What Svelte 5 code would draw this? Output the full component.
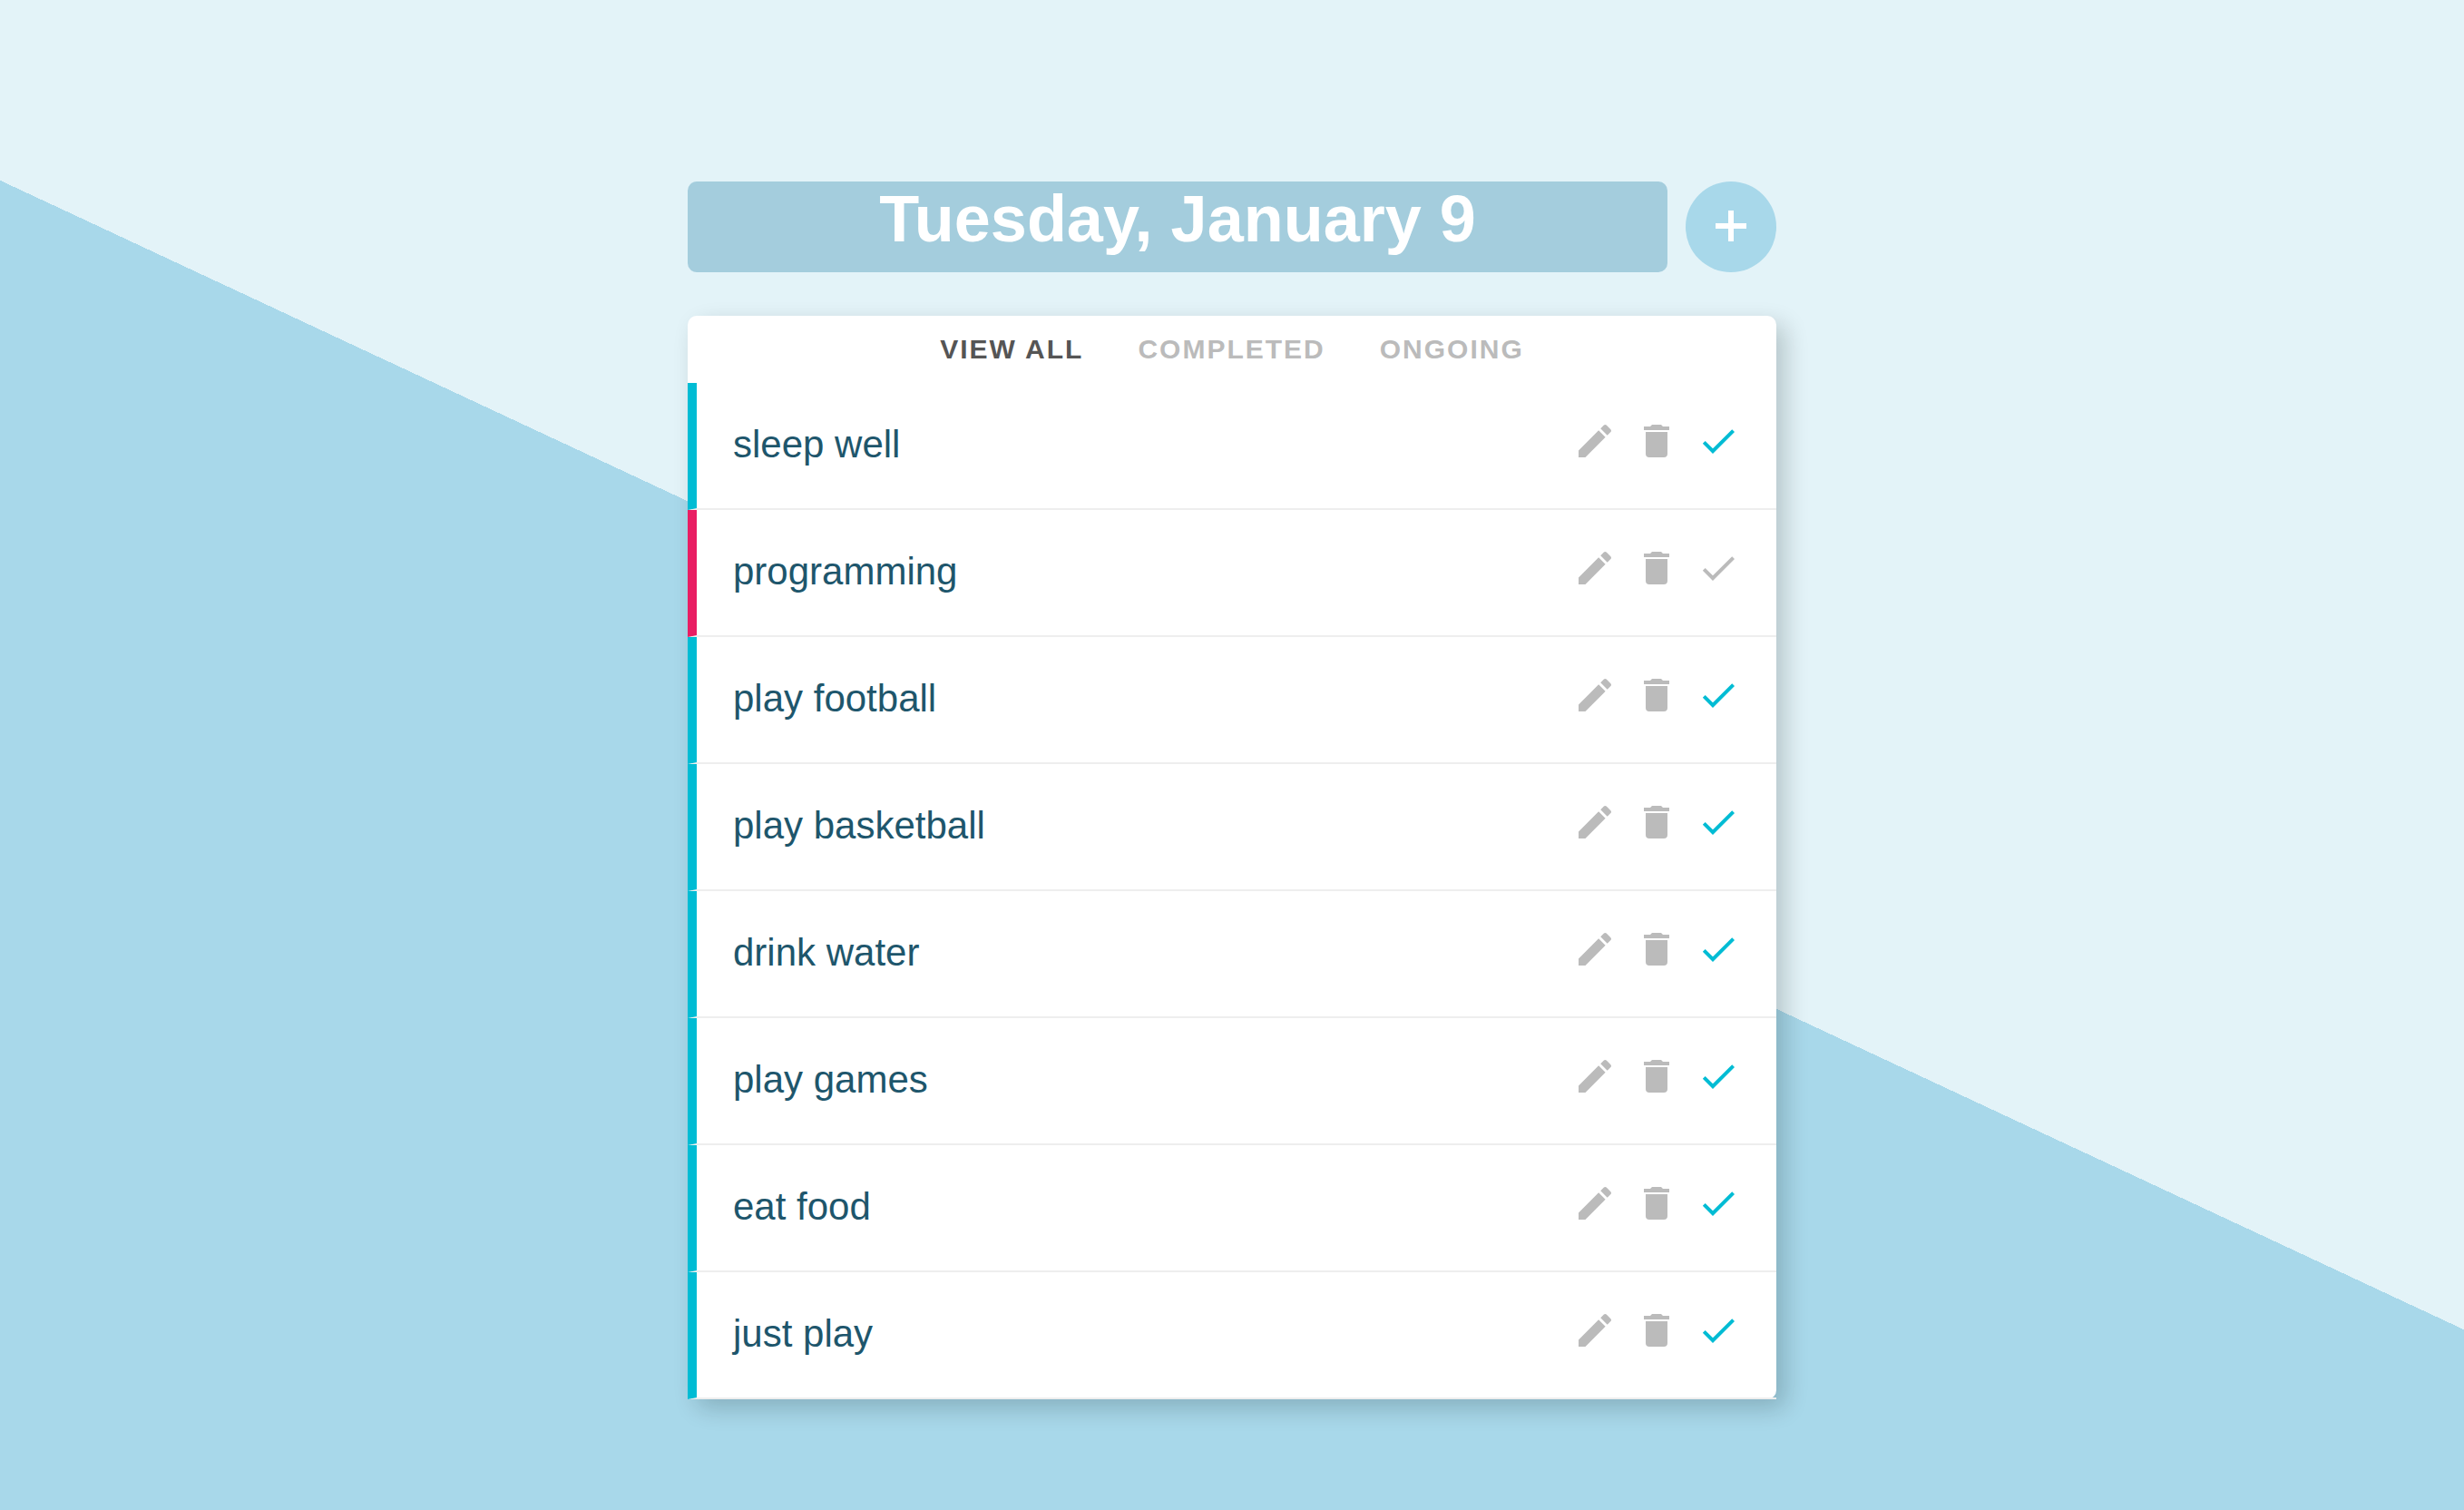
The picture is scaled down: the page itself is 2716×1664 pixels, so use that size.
<script>
  const filters = ['View all', 'Completed', 'Ongoing'];
  let active = $state('View all');
  let tasks = $state([
    { name: 'sleep well', done: true },
    { name: 'programming', done: false },
    { name: 'play football', done: true },
    { name: 'play basketball', done: true },
    { name: 'drink water', done: true },
    { name: 'play games', done: true },
    { name: 'eat food', done: true },
    { name: 'just play', done: true }
  ]);

  const visible = $derived(
    tasks.filter((t) => active === 'View all' || t.done === (active === 'Completed'))
  );

  function remove(task) {
    tasks = tasks.filter((t) => t !== task);
  }
</script>

<main>
  <header>
    <h1>Tuesday, January 9</h1>
    <button class="add" aria-label="Add task">
      <svg viewBox="0 0 34 34" aria-hidden="true"><path d="M14 0h6v14h14v6H20v14h-6V20H0v-6h14z" /></svg>
    </button>
  </header>

  <section class="card">
    <nav>
      {#each filters as f}
        <button class="filter" class:active={active === f} onclick={() => (active = f)}>{f}</button>
      {/each}
    </nav>
    <ul>
      {#each visible as task}
        <li class:done={task.done}>
          <span class="name">{task.name}</span>
          <div class="actions">
            <button class="icon" aria-label="Edit {task.name}">
              <svg viewBox="0 0 24 24" aria-hidden="true"><path d="M20.71 7.04c.39-.39.39-1.04 0-1.41l-2.34-2.34c-.37-.39-1.02-.39-1.41 0l-1.84 1.83 3.75 3.75M3 17.25V21h3.75L17.81 9.93l-3.75-3.75L3 17.25z" /></svg>
            </button>
            <button class="icon" aria-label="Delete {task.name}" onclick={() => remove(task)}>
              <svg viewBox="0 0 24 24" aria-hidden="true"><path d="M19 4h-3.5l-1-1h-5l-1 1H5v2h14M6 19a2 2 0 0 0 2 2h8a2 2 0 0 0 2-2V7H6v12z" /></svg>
            </button>
            <button class="icon check" aria-label="Toggle {task.name}" aria-pressed={task.done} onclick={() => (task.done = !task.done)}>
              <svg viewBox="0 0 24 24" aria-hidden="true"><path d="M9 16.17L4.83 12l-1.42 1.41L9 19 21 7l-1.41-1.41z" /></svg>
            </button>
          </div>
        </li>
      {/each}
    </ul>
  </section>
</main>

<style>
  :global(body) {
    margin: 0;
  }

  main {
    box-sizing: border-box;
    min-height: 100vh;
    padding: 200px 40px 120px;
    background: linear-gradient(25deg, #a8d8ea 50%, #e3f3f8 50%);
    font-family: Arial, 'Liberation Sans', sans-serif;
  }

  header,
  .card {
    max-width: 1200px;
    margin: 0 auto;
  }

  header {
    display: flex;
    gap: 20px;
    margin-bottom: 48px;
  }

  h1 {
    flex: 1;
    min-height: 100px;
    margin: 0;
    border-radius: 10px;
    background: #a4cddd;
    color: #fff;
    font-size: 72px;
    line-height: 82px;
    text-align: center;
  }

  button {
    padding: 0;
    border: 0;
    background: none;
    font-family: inherit;
    cursor: pointer;
  }

  svg {
    display: block;
    fill: currentColor;
  }

  .add {
    box-sizing: border-box;
    display: grid;
    place-items: center;
    width: 100px;
    height: 100px;
    padding-bottom: 2px;
    border-radius: 50%;
    background: #a8d8ea;
    color: #fff;
  }

  .add svg {
    width: 34px;
    height: 34px;
  }

  .card {
    border-radius: 10px;
    background: #fff;
    box-shadow: 10px 10px 26px rgba(0, 20, 20, 0.2);
  }

  nav {
    display: flex;
    justify-content: center;
    gap: 60px;
    padding: 20px 0;
  }

  .filter {
    color: #bbb;
    font-size: 30px;
    font-weight: 700;
    line-height: 34px;
    letter-spacing: 2px;
    text-transform: uppercase;
  }

  .filter.active {
    color: #555;
  }

  ul {
    margin: 0;
    padding: 0;
    list-style: none;
  }

  li {
    display: flex;
    justify-content: space-between;
    align-items: flex-start;
    padding: 40px 40px 42px;
    border-left: 10px solid #e91e63;
    border-bottom: 2px solid #eee;
  }

  li.done {
    border-left-color: #00bcd4;
  }

  .name {
    color: #1e566c;
    font-size: 42px;
    line-height: 56px;
  }

  .actions {
    display: flex;
    gap: 20px;
  }

  .icon {
    color: #bbb;
  }

  .icon svg {
    width: 48px;
    height: 48px;
  }

  .done .check {
    color: #00bcd4;
  }
</style>
